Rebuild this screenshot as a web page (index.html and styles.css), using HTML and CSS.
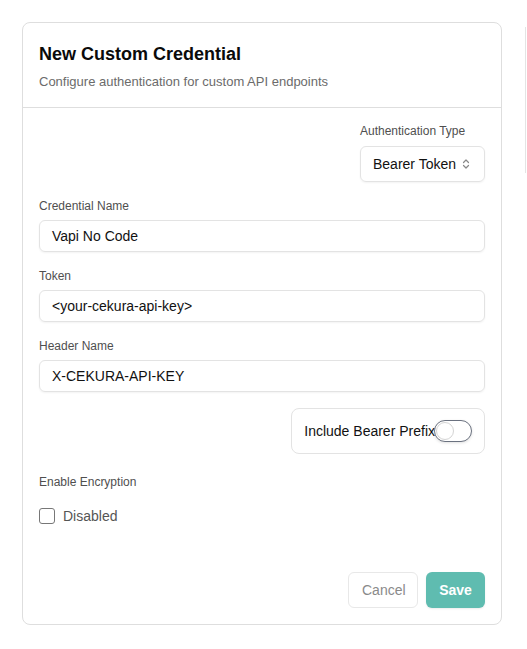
FILE: index.html
```html
<!DOCTYPE html>
<html>
<head>
<meta charset="utf-8">
<link rel="stylesheet" href="styles.css">
</head>
<body>
<div class="page">
  <div class="card">
    <div class="card-header">
      <h1 class="title">New Custom Credential</h1>
      <p class="subtitle">Configure authentication for custom API endpoints</p>
    </div>
    <div class="card-body">
      <div class="auth-row">
        <div class="auth-field">
          <label class="label">Authentication Type</label>
          <div class="select">
            <span>Bearer Token</span>
            <svg class="chev" width="8" height="12" viewBox="0 0 8 12" fill="none" stroke="#888" stroke-width="1.2" stroke-linecap="round" stroke-linejoin="round"><path d="M1.5 4.5 4 2l2.5 2.5"/><path d="M1.5 7.5 4 10l2.5-2.5"/></svg>
          </div>
        </div>
      </div>
      <div class="field">
        <label class="label">Credential Name</label>
        <div class="input">Vapi No Code</div>
      </div>
      <div class="field">
        <label class="label">Token</label>
        <div class="input">&lt;your-cekura-api-key&gt;</div>
      </div>
      <div class="field">
        <label class="label">Header Name</label>
        <div class="input">X-CEKURA-API-KEY</div>
      </div>
      <div class="toggle-row">
        <div class="toggle-box">
          <span>Include Bearer Prefix</span>
          <span class="switch"><span class="knob"></span></span>
        </div>
      </div>
      <div class="enc">
        <label class="label">Enable Encryption</label>
        <div class="check-row">
          <span class="checkbox"></span>
          <span class="check-text">Disabled</span>
        </div>
      </div>
      <div class="footer">
        <button class="btn btn-cancel">Cancel</button>
        <button class="btn btn-save">Save</button>
      </div>
    </div>
  </div>
  <div class="side-edge"></div>
</div>
</body>
</html>
```

FILE: styles.css
```css
* { box-sizing: border-box; }
html, body { margin: 0; padding: 0; background: #fff; }
body {
  font-family: "Liberation Sans", Arial, sans-serif;
  color: #111;
}
.page {
  position: relative;
  width: 527px;
  height: 649px;
  padding: 22px 0 0 22px;
}
.card {
  width: 480px;
  height: 603px;
  border: 1px solid #dedede;
  border-radius: 8px;
  display: flex;
  flex-direction: column;
}
.card-header {
  padding: 17px 16px 15px 16px;
  border-bottom: 1px solid #dedede;
}
.title {
  margin: 0;
  font-size: 18px;
  line-height: 28px;
  font-weight: 700;
  color: #0a0a0a;
}
.subtitle {
  margin: 4px 0 0 0;
  font-size: 13px;
  line-height: 20px;
  color: #6b6b6b;
}
.card-body {
  flex: 1;
  padding: 16px 16px 16px 16px;
  display: flex;
  flex-direction: column;
}
.label {
  display: block;
  font-size: 12px;
  line-height: 14px;
  color: #4f4f4f;
  margin-bottom: 7px;
}
.auth-field .label { margin-bottom: 8px; }
.auth-row {
  display: flex;
  justify-content: flex-end;
}
.auth-field { display: flex; flex-direction: column; }
.select {
  height: 36px;
  width: 125px;
  border: 1px solid #e3e3e3;
  border-radius: 6px;
  box-shadow: 0 1px 2px rgba(0,0,0,0.05);
  display: flex;
  align-items: center;
  padding: 0 12px;
  font-size: 14px;
  color: #111;
  gap: 4px;
}
.chev { margin-left: 2px; }
.field { margin-top: 17px; }
.input {
  height: 32px;
  border: 1px solid #e3e3e3;
  border-radius: 6px;
  box-shadow: 0 1px 2px rgba(0,0,0,0.05);
  display: flex;
  align-items: center;
  padding: 0 12px;
  font-size: 14px;
  color: #111;
}
.toggle-row {
  margin-top: 16px;
  display: flex;
  justify-content: flex-end;
}
.toggle-box {
  height: 46px;
  border: 1px solid #e3e3e3;
  border-radius: 8px;
  display: flex;
  align-items: center;
  padding: 0 12px;
  font-size: 14px;
  color: #111;
}
.switch {
  position: relative;
  width: 38px;
  height: 22px;
  margin-left: -1px;
  border: 1px solid #6b7280;
  border-radius: 11px;
  background: #fff;
  box-shadow: 0 1px 3px rgba(0,0,0,0.12);
  display: flex;
  align-items: center;
  padding-left: 1px;
}
.knob {
  width: 18px;
  height: 18px;
  border-radius: 50%;
  background: #fff;
  border: 1px solid #d4d4d4;
}
.enc { margin-top: 21px; }
.enc .label { margin-bottom: 17px; }
.check-row {
  display: flex;
  align-items: center;
  gap: 8px;
  height: 20px;
}
.checkbox {
  width: 16px;
  height: 16px;
  border: 1px solid #777;
  border-radius: 3px;
}
.check-text {
  font-size: 14px;
  color: #555;
}
.footer {
  margin-top: auto;
  display: flex;
  justify-content: flex-end;
  gap: 8px;
}
.btn {
  height: 36px;
  border-radius: 6px;
  font-family: "Liberation Sans", Arial, sans-serif;
  font-size: 14px;
  padding: 0 13px;
  cursor: pointer;
}
.btn-cancel {
  width: 70px;
  background: #fff;
  border: 1px solid #e8e8e8;
  color: #8a8a8a;
}
.btn-save {
  width: 59px;
  background: #5fbcb0;
  border: none;
  color: #fff;
  font-weight: 700;
  box-shadow: 0 1px 2px rgba(0,0,0,0.08);
}
.side-edge {
  position: absolute;
  left: 525px;
  top: 27px;
  width: 2px;
  height: 146px;
  border-left: 1px solid #e4e4e4;
}
```
